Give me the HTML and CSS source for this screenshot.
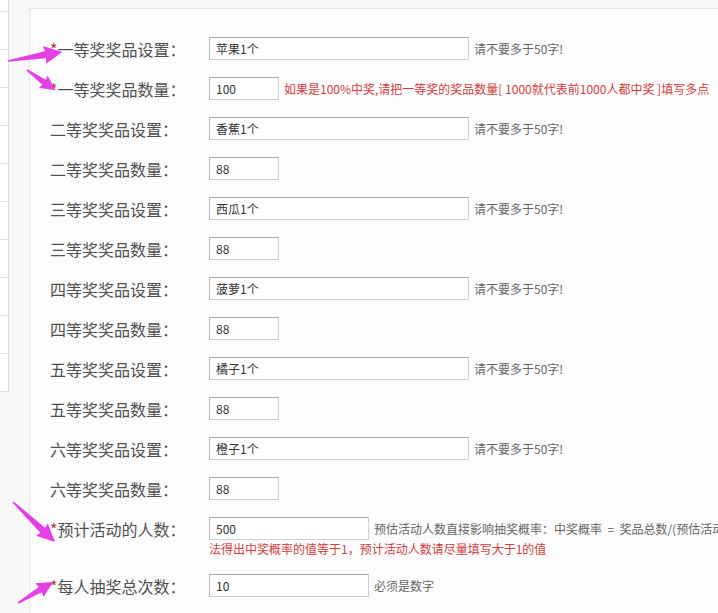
FILE: index.html
```html
<!DOCTYPE html>
<html lang="zh-CN">
<head>
<meta charset="utf-8">
<title>奖品设置</title>
<link rel="stylesheet" href="styles.css">
</head>
<body>
<div class="page">
  <aside class="sidebar">
    <div class="side-item first"></div>
    <div class="side-item"></div>
    <div class="side-item"></div>
    <div class="side-item"></div>
    <div class="side-item"></div>
    <div class="side-item"></div>
    <div class="side-item"></div>
    <div class="side-item"></div>
    <div class="side-item"></div>
    <div class="side-item"></div>
    <div class="side-item"></div>
  </aside>
  <main class="panel">
    <div class="row">
      <label class="label"><span class="req">*</span>一等奖奖品设置：</label>
      <div class="field"><input class="inp long" type="text" value="苹果1个"><span class="hint">请不要多于50字!</span></div>
    </div>
    <div class="row">
      <label class="label"><span class="req">*</span>一等奖奖品数量：</label>
      <div class="field"><input class="inp short" type="text" value="100"><span class="hint red">如果是100%中奖,请把一等奖的奖品数量[ 1000就代表前1000人都中奖 ]填写多点</span></div>
    </div>
    <div class="row">
      <label class="label">二等奖奖品设置：</label>
      <div class="field"><input class="inp long" type="text" value="香蕉1个"><span class="hint">请不要多于50字!</span></div>
    </div>
    <div class="row">
      <label class="label">二等奖奖品数量：</label>
      <div class="field"><input class="inp short" type="text" value="88"></div>
    </div>
    <div class="row">
      <label class="label">三等奖奖品设置：</label>
      <div class="field"><input class="inp long" type="text" value="西瓜1个"><span class="hint">请不要多于50字!</span></div>
    </div>
    <div class="row">
      <label class="label">三等奖奖品数量：</label>
      <div class="field"><input class="inp short" type="text" value="88"></div>
    </div>
    <div class="row">
      <label class="label">四等奖奖品设置：</label>
      <div class="field"><input class="inp long" type="text" value="菠萝1个"><span class="hint">请不要多于50字!</span></div>
    </div>
    <div class="row">
      <label class="label">四等奖奖品数量：</label>
      <div class="field"><input class="inp short" type="text" value="88"></div>
    </div>
    <div class="row">
      <label class="label">五等奖奖品设置：</label>
      <div class="field"><input class="inp long" type="text" value="橘子1个"><span class="hint">请不要多于50字!</span></div>
    </div>
    <div class="row">
      <label class="label">五等奖奖品数量：</label>
      <div class="field"><input class="inp short" type="text" value="88"></div>
    </div>
    <div class="row">
      <label class="label">六等奖奖品设置：</label>
      <div class="field"><input class="inp long" type="text" value="橙子1个"><span class="hint">请不要多于50字!</span></div>
    </div>
    <div class="row">
      <label class="label">六等奖奖品数量：</label>
      <div class="field"><input class="inp short" type="text" value="88"></div>
    </div>
    <div class="row">
      <label class="label"><span class="req">*</span>预计活动的人数：</label>
      <div class="field-col">
        <div class="field"><input class="inp mid" type="text" value="500"><span class="hint">预估活动人数直接影响抽奖概率：中奖概率&nbsp;&nbsp;=&nbsp;&nbsp;奖品总数/(预估活动人数*每人抽奖次数)，<span class="red">如果奖品总数大于等于预估活动人数,则无</span></span></div>
        <div class="wrap-line red">法得出中奖概率的值等于1，预计活动人数请尽量填写大于1的值</div>
      </div>
    </div>
    <div class="row">
      <label class="label"><span class="req">*</span>每人抽奖总次数：</label>
      <div class="field"><input class="inp mid" type="text" value="10"><span class="hint">必须是数字</span></div>
    </div>
  </main>
  <svg class="arrows" width="718" height="613" viewBox="0 0 718 613" aria-hidden="true">
    <g fill="#e53fe6">
      <polygon transform="translate(8 61) rotate(-9.5)" points="0,-0.8 38,-3.5 37,-9 55,0 37,9 38,3.5 0,0.8"/>
      <polygon transform="translate(27 70) rotate(35.5)" points="0,-0.8 21,-3 20,-7.5 35,0 20,7.5 21,3 0,0.8"/>
      <polygon transform="translate(13 502) rotate(43.6)" points="0,-0.8 41,-3.5 40,-8.5 58,0 40,8.5 41,3.5 0,0.8"/>
      <polygon transform="translate(18 603) rotate(-31)" points="0,-0.8 26,-3 25,-8 41,0 25,8 26,3 0,0.8"/>
    </g>
  </svg>
</div>
</body>
</html>
```

FILE: styles.css
```css
html, body {
  margin: 0;
  padding: 0;
}
body {
  background: #f8f8f8;
  font-family: "Noto Sans CJK SC", "Noto Sans", "Liberation Sans", sans-serif;
  overflow: hidden;
}
.page {
  position: relative;
  display: flex;
  width: 718px;
  height: 613px;
  overflow: hidden;
}
.sidebar {
  flex: 0 0 8px;
  width: 8px;
  background: #fff;
  border-right: 1px solid #dcdcdc;
  align-self: flex-start;
}
.side-item {
  height: 37px;
  border-bottom: 1px solid #e2e2e2;
}
.side-item.first {
  height: 11px;
}
.panel {
  flex: 0 0 auto;
  width: 760px;
  margin: 8px 0 0 20px;
  border: 1px solid #e6e6e6;
  border-right: none;
  background: #fcfcfc;
  padding: 28px 0 0 20px;
  min-height: 700px;
}
.row {
  display: flex;
  align-items: flex-start;
  margin-bottom: 17px;
}
.label {
  flex: 0 0 159px;
  width: 159px;
  height: 23px;
  line-height: 25px;
  font-size: 16px;
  color: #505050;
  white-space: nowrap;
}
.req {
  color: #b03a3a;
}
.field {
  display: flex;
  align-items: center;
  height: 23px;
  white-space: nowrap;
}
.field-col {
  display: flex;
  flex-direction: column;
}
.inp {
  box-sizing: border-box;
  height: 23px;
  margin: 0;
  padding: 0 6px;
  border: 1px solid #cfcfcf;
  border-top-color: #a8a8a8;
  border-left-color: #b8b8b8;
  background: #fff;
  font-family: "Noto Sans CJK SC", "Noto Sans", "Liberation Sans", sans-serif;
  font-size: 12px;
  color: #333;
  outline: none;
}
.inp.long {
  width: 260px;
}
.inp.short {
  width: 70px;
}
.inp.mid {
  width: 160px;
}
.hint {
  margin-left: 5px;
  font-size: 12px;
  color: #666;
  white-space: nowrap;
}
.red {
  color: #d23c3c;
}
.wrap-line {
  font-size: 12px;
  line-height: 17px;
  height: 17px;
  white-space: nowrap;
}
.arrows {
  position: absolute;
  left: 0;
  top: 0;
  pointer-events: none;
}
```
